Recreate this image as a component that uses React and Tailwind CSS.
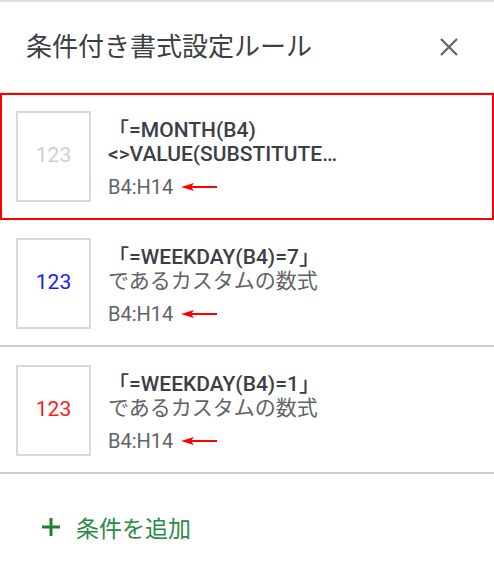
const rules = [
    { sample: 'text-[#cfcfcf]', line1: '「=MONTH(B4)', line2: '<>VALUE(SUBSTITUTE…', bold2: true, active: true },
    { sample: 'text-[#1a1aff]', line1: '「=WEEKDAY(B4)=7」', line2: 'であるカスタムの数式', bold2: false },
    { sample: 'text-[#ff1a1a]', line1: '「=WEEKDAY(B4)=1」', line2: 'であるカスタムの数式', bold2: false },
]

const RedArrow = () => (
    <svg width="36" height="10" viewBox="0 0 36 10" className="ml-2">
        <line x1="8" y1="5" x2="36" y2="5" stroke="#ff0000" strokeWidth="2" />
        <polygon points="0,5 13,1 10,5 13,9" fill="#ff0000" />
    </svg>
)

const RuleItem = ({ rule }) => (
    <div className="relative h-[127px] border-b-2 border-[#cccccc] flex items-center pl-4">
        {/* 枠 (注釈) */}
        {rule.active && (
            <div className="absolute inset-x-0 top-0 -bottom-0.5 border-2 border-[#ff0000] pointer-events-none" />
        )}
        <div className="w-[75px] h-[91px] mt-px border-2 border-[#d9d9d9] flex items-center justify-center">
            <span className={`text-[21px] ${rule.sample}`}>123</span>
        </div>
        <div className="ml-[17px] mt-[5px] flex flex-col">
            <div className="text-[21px] leading-[24px] font-medium text-[#3c4043] whitespace-nowrap">{rule.line1}</div>
            <div className={`text-[21px] leading-[25px] whitespace-nowrap ${rule.bold2 ? 'font-medium text-[#3c4043]' : 'text-[#5f6368]'}`}>
                {rule.line2}
            </div>
            <div className="mt-2 flex items-center text-[20px] leading-[24px] text-[#5f6368]">
                <span>B4:H14</span>
                <RedArrow />
            </div>
        </div>
    </div>
)

export default function App() {
    return (
        <div className="w-[494px] h-[580px] bg-white border-t-2 border-[#dadce0] font-[Roboto,'Noto_Sans_CJK_JP',sans-serif] overflow-hidden">
            {/* ヘッダー */}
            <div className="h-[91px] border-b border-[#e3e3e3] flex items-center justify-between pl-[26px] pr-[36px]">
                <h1 className="text-[26px] text-[#3c4043] mb-[5px] font-['Noto_Sans_CJK_JP',sans-serif]">条件付き書式設定ルール</h1>
                <svg width="18" height="18" viewBox="0 0 18 18">
                    <path d="M1 1L17 17M17 1L1 17" stroke="#5f6368" strokeWidth="2.2" />
                </svg>
            </div>

            {rules.map((rule, i) => (
                <RuleItem key={i} rule={rule} />
            ))}

            {/* 条件を追加 */}
            <div className="h-[106px] flex items-center pl-[42px]">
                <svg width="18" height="18" viewBox="0 0 18 18">
                    <path d="M9 0V18M0 9H18" stroke="#1e7e34" strokeWidth="3" />
                </svg>
                <span className="ml-4 text-[23px] text-[#2b8a47] font-['Noto_Sans_CJK_JP',sans-serif]">条件を追加</span>
            </div>
        </div>
    )
}
